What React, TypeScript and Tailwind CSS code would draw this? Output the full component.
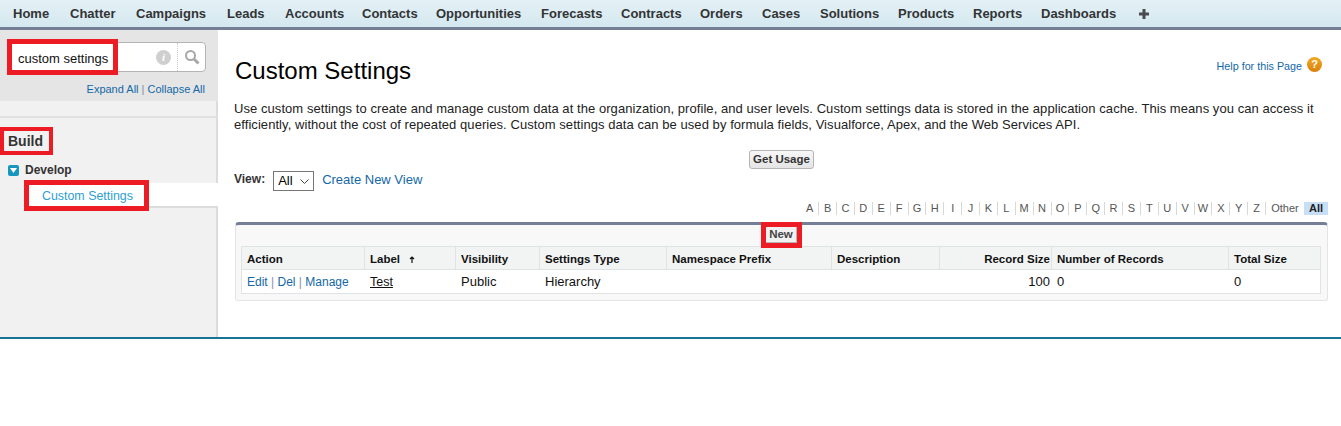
const nav: [string, string][] = [["Home","w-[57px]"],["Chatter","w-[66px]"],["Campaigns","w-[91px]"],["Leads","w-[58px]"],["Accounts","w-[77px]"],["Contacts","w-[74px]"],["Opportunities","w-[105px]"],["Forecasts","w-[80px]"],["Contracts","w-[79px]"],["Orders","w-[62px]"],["Cases","w-[58px]"],["Solutions","w-[78px]"],["Products","w-[75px]"],["Reports","w-[68px]"],["Dashboards","w-[98px]"]];
const letters = "ABCDEFGHIJKLMNOPQRSTUVWXYZ".split("");
const cols: [string, string, string?][] = [
  ["Action","w-[123px]"],["Label","w-[91px]"],["Visibility","w-[84px]"],["Settings Type","w-[127px]"],["Namespace Prefix","w-[165px]"],["Description","w-[108px]"],["Record Size","w-[112px]","r"],["Number of Records","w-[177px]"],["Total Size","flex-1"],
];

export default function App() {
  return (
    <div className="w-[1341px] h-[426px] bg-white overflow-hidden font-['Liberation_Sans',Arial,sans-serif] text-[12px] text-black">
      <nav className="h-[30px] border-b-[3px] border-[#747e96] bg-gradient-to-b from-[#e4f1f6] to-[#d4e8ef] flex items-center pl-[13px] text-[13px] font-bold text-[#333435]">
        {nav.map(([n, w]) => <span key={n} className={`${w} whitespace-nowrap`}>{n}</span>)}
        <svg width="10" height="10" viewBox="0 0 10 10"><path d="M3.5 0h3v3.500H10v3H6.500V10h-3V6.500H0v-3h3.500z" fill="#4a4a50"/></svg>
      </nav>
      <div className="flex h-[307px] border-b-[2px] border-[#1a7396] box-content">
        <aside className="w-[218px] shrink-0 bg-[#f1f1f1] border-r-[2px] border-[#dcdcdc] flex flex-col">
          <div className="h-[71px] bg-[#e5e5e5] pt-[12px] pl-[8px] pr-[10px] -mr-[2px]">
            <div className="relative h-[30px] w-[198px] border border-[#b4b4b4] rounded-[4px] bg-white flex items-center justify-end">
              <div className="absolute -left-[2px] -top-[4px] w-[111px] h-[36px] border-[5px] border-[#ed1c24] bg-white flex items-center pl-[6px] pt-[4px] text-[#111] text-[13px]">custom settings</div>
              <div className="w-[15px] h-[15px] rounded-full bg-[#cfcfcf] text-white text-[11px] font-bold italic flex items-center justify-center mr-[6px] mt-[1px] font-['Liberation_Serif',serif]">i</div>
              <div className="h-full w-[28px] border-l border-dotted border-[#ccc] flex items-center justify-center">
                <svg width="16" height="16" viewBox="0 0 16 16" fill="none" stroke="#a8a8a8"><circle cx="6.500" cy="6.500" r="4.500" strokeWidth="2"/><path d="M10 10l4.500 4.500" strokeWidth="3"/></svg>
              </div>
            </div>
            <div className="mt-[10px] text-right text-[11px] text-[#1468a8] pr-[3px] leading-[14px]">Expand All <span className="text-[#7d8ea3]">|</span> Collapse All</div>
          </div>
          <div className="h-[17px] border-b-[2px] border-[#e0e0e0] mr-[-2px]" />
          <div className="relative flex-1">
            <div className="absolute left-0 top-[9px] w-[53px] h-[28px] border-[4px] border-[#ed1c24] bg-[#f1f1f1] flex items-center pl-[4px] text-[14px] font-bold text-[#333]">Build</div>
            <div className="absolute left-[8px] top-[43px] flex items-center gap-[6px] text-[12px] font-bold text-[#333]">
              <span className="w-[11px] h-[11px] rounded-[2px] bg-[#1797c0] flex items-center justify-center">
                <svg width="7" height="5" viewBox="0 0 7 5"><path d="M0 0h7L3.500 5z" fill="#fff"/></svg>
              </span>
              Develop
            </div>
            <div className="absolute left-[24px] right-[-2px] top-[65px] h-[25px] bg-white border-b-[2px] border-[#dcdcdc]" />
            <div className="absolute left-[24px] top-[62px] w-[125px] h-[31px] border-[5px] border-[#ed1c24] bg-white flex items-center pl-[13px] pt-[2px] text-[12.400px] text-[#2c9fd0]">Custom Settings</div>
          </div>
        </aside>
        <main className="flex-1 pl-[17px] pr-[13px] min-w-0">
          <div className="flex justify-between items-start h-[71px]">
            <h1 className="text-[24px] leading-[28px] mt-[27px] text-black">Custom Settings</h1>
            <div className="flex items-center mt-[25px] mr-[6px] gap-[5px] text-[10.750px] text-[#1468a8]">
              <span className="mt-[3px]">Help for this Page</span>
              <span className="w-[15px] h-[15px] rounded-full bg-gradient-to-b from-[#f2a91f] to-[#d9800a] text-white text-[11px] font-bold flex items-center justify-center">?</span>
            </div>
          </div>
          <p className="-ml-[1px] text-[13px] leading-[16px] text-[#222] whitespace-nowrap tracking-[0.06px]">Use custom settings to create and manage custom data at the organization, profile, and user levels. Custom settings data is stored in the application cache. This means you can access it<br/>efficiently, without the cost of repeated queries. Custom settings data can be used by formula fields, Visualforce, Apex, and the Web Services API.</p>
          <div className="flex justify-center mt-[17px]">
            <button className="h-[19px] px-[3px] border border-[#b5b5b5] rounded-[3px] bg-gradient-to-b from-[#f7f7f7] to-[#e4e4e4] text-[11.500px] font-bold text-[#333]">Get Usage</button>
          </div>
          <div className="flex items-center h-[22px] mt-[1px]">
            <span className="font-bold text-[12px] text-[#333] mr-[8px] mb-[5px] -ml-[1px]">View:</span>
            <span className="w-[41px] h-[20px] border border-[#767676] flex items-center pl-[4px] text-[13px] gap-[7px]">All
              <svg width="9" height="5" viewBox="0 0 9 5" fill="none" stroke="#444"><path d="M.5.5l4 4 4-4"/></svg>
            </span>
            <span className="ml-[8px] text-[#1468a8] text-[13px] mb-[3px]">Create New View</span>
          </div>
          <div className="flex justify-end items-center mt-[10px] h-[13px] text-[11px] text-[#555]">
            {letters.map(l => <span key={l} className="w-[17.880px] text-center border-r border-[#d8d8d8] leading-[13px]">{l}</span>)}
            <span className="w-[38px] text-center leading-[13px]">Other</span>
            <span className="w-[24px] text-center bg-[#c6dff6] font-bold text-[#222] leading-[13px]">All</span>
          </div>
          <div className="mt-[7px] border-t-[3px] border-[#747e96] rounded-t-[4px] bg-[#f8f8f8] border-x border-b border-x-[#e4e4e4] border-b-[#e4e4e4] rounded-b-[3px] h-[79px] pl-[5px] pr-[6px]">
            <div className="relative h-[21px] flex justify-center">
              <div className="absolute left-[520px] -top-[3px] w-[41px] h-[26px] border-[5px] border-[#ed1c24] bg-white">
                <div className="w-full h-full bg-[#f1f1f1] border-r border-b border-[#b5b5b5] flex items-center justify-center text-[11.500px] font-bold text-[#444]">New</div>
              </div>
            </div>
            <div className="border border-[#e0e3e5] bg-white">
              <div className="flex h-[23px] bg-[#f2f3f3] border-b border-[#e0e3e5] text-[11.500px] font-bold text-[#111]">
                {cols.map(([t, w, r]) => (
                  <div key={t} className={`${w} flex items-center px-[5px] pt-[3px] border-r border-[#e0e3e5] last:border-r-0 whitespace-nowrap ${r ? "justify-end pr-[1px]" : ""}`}>
                    {t}{t === "Label" && <svg width="6" height="7" viewBox="0 0 6 7" className="ml-[9px]" fill="none" stroke="#111"><path d="M3 7V1M1 3l2-2 2 2" strokeWidth="1.200"/></svg>}
                  </div>
                ))}
              </div>
              <div className="flex h-[23px] items-center text-[13px] text-[#111]">
                <div className="w-[123px] px-[5px] text-[12px] text-[#1468a8] whitespace-nowrap mt-[1px]">Edit <span className="text-[#8a8fb0]">|</span> Del <span className="text-[#8a8fb0]">|</span> Manage</div>
                <div className="w-[91px] px-[5px] underline text-[12.500px] mt-[1px]">Test</div>
                <div className="w-[84px] px-[5px]">Public</div>
                <div className="w-[127px] px-[5px]">Hierarchy</div>
                <div className="w-[165px]" />
                <div className="w-[108px]" />
                <div className="w-[112px] text-right pr-[2px]">100</div>
                <div className="w-[177px] px-[5px]">0</div>
                <div className="flex-1 px-[5px]">0</div>
              </div>
            </div>
          </div>
        </main>
      </div>
    </div>
  );
}
